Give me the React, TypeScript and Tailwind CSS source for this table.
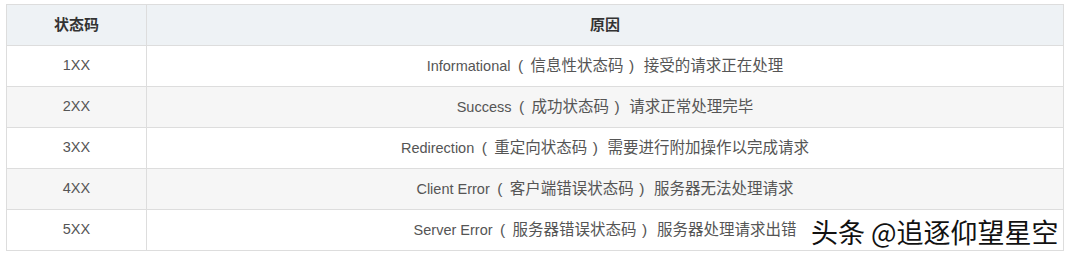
const rows = [
  { code: "1XX", en: "Informational", inner: "信息性状态码", tail: "接受的请求正在处理" },
  { code: "2XX", en: "Success", inner: "成功状态码", tail: "请求正常处理完毕" },
  { code: "3XX", en: "Redirection", inner: "重定向状态码", tail: "需要进行附加操作以完成请求" },
  { code: "4XX", en: "Client Error", inner: "客户端错误状态码", tail: "服务器无法处理请求" },
  { code: "5XX", en: "Server Error", inner: "服务器错误状态码", tail: "服务器处理请求出错" },
];

export default function App() {
  return (
    <div className="relative w-[1068px] h-[256px] bg-white pl-[6px] pt-[4px] font-['Liberation_Sans','Noto_Sans_CJK_SC',sans-serif]">
      <table className="w-[1058px] border-collapse table-fixed">
        <thead>
          <tr className="bg-[#eef2f5]">
            <th className="w-[140px] h-[41px] border border-[#dddddd] text-[15px] font-bold text-[#333333] text-center p-0">
              状态码
            </th>
            <th className="h-[41px] border border-[#dddddd] text-[15px] font-bold text-[#333333] text-center p-0">
              原因
            </th>
          </tr>
        </thead>
        <tbody>
          {rows.map((row, i) => (
            <tr key={row.code} className={i % 2 === 1 ? "bg-[#f6f6f6]" : "bg-white"}>
              <td className="h-[41px] border border-[#dddddd] text-center text-[14.5px] text-[#555555] p-0">
                {row.code}
              </td>
              <td className="h-[41px] border border-[#dddddd] text-center text-[#555555] p-0 whitespace-nowrap">
                <span className="text-[14.5px]">{row.en}</span>
                <span className="inline-block w-[20px] text-center text-[15.5px]">(</span>
                <span className="text-[15.5px]">{row.inner}</span>
                <span className="inline-block w-[16px] text-center text-[15.5px]">)</span>
                <span className="text-[15.5px]"> {row.tail}</span>
              </td>
            </tr>
          ))}
        </tbody>
      </table>
      {/* 水印 */}
      <div className="absolute left-[811px] top-[215px] text-[27px] leading-[34px] text-[#111111] whitespace-nowrap font-['Noto_Sans_CJK_SC',sans-serif] [text-shadow:1px_1px_0_#fff,-1px_-1px_0_#fff,1px_-1px_0_#fff,-1px_1px_0_#fff]">
        头条 @追逐仰望星空
      </div>
    </div>
  );
}
